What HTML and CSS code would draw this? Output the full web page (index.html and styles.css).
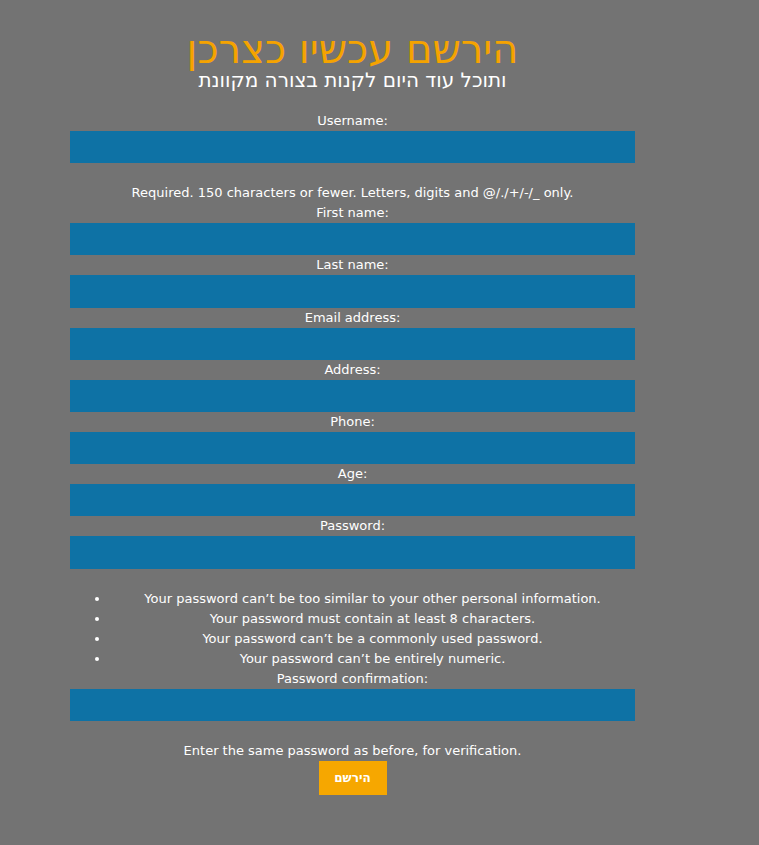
FILE: index.html
```html
<!DOCTYPE html>
<html lang="he">
<head>
<meta charset="utf-8">
<title>הירשם</title>
<link rel="stylesheet" href="styles.css">
</head>
<body>
<div class="page">
  <header class="hero">
    <h1 class="title">הירשם עכשיו כצרכן</h1>
    <h2 class="subtitle">ותוכל עוד היום לקנות בצורה מקוונת</h2>
  </header>
  <form class="form">
    <div class="field">
      <label class="label">Username:</label>
      <input class="input" type="text">
      <span class="help gap">Required. 150 characters or fewer. Letters, digits and @/./+/-/_ only.</span>
    </div>
    <div class="field">
      <label class="label">First name:</label>
      <input class="input" type="text">
    </div>
    <div class="field">
      <label class="label">Last name:</label>
      <input class="input" type="text">
    </div>
    <div class="field">
      <label class="label">Email address:</label>
      <input class="input" type="text">
    </div>
    <div class="field">
      <label class="label">Address:</label>
      <input class="input" type="text">
    </div>
    <div class="field">
      <label class="label">Phone:</label>
      <input class="input" type="text">
    </div>
    <div class="field">
      <label class="label">Age:</label>
      <input class="input" type="text">
    </div>
    <div class="field">
      <label class="label">Password:</label>
      <input class="input" type="password">
      <ul class="rules">
        <li>Your password can’t be too similar to your other personal information.</li>
        <li>Your password must contain at least 8 characters.</li>
        <li>Your password can’t be a commonly used password.</li>
        <li>Your password can’t be entirely numeric.</li>
      </ul>
    </div>
    <div class="field">
      <label class="label">Password confirmation:</label>
      <input class="input" type="password">
      <span class="help gap">Enter the same password as before, for verification.</span>
    </div>
    <div class="actions">
      <button class="submit" type="button">הירשם</button>
    </div>
  </form>
</div>
</body>
</html>
```
FILE: styles.css
```css
html, body {
  margin: 0;
  padding: 0;
  background: #737373;
}
body {
  font-family: "DejaVu Sans", sans-serif;
  font-size: 13px;
  line-height: 20px;
  color: #ffffff;
}
.page {
  width: 565px;
  margin-left: 70px;
  padding-top: 29px;
  text-align: center;
}
.hero {
  display: flex;
  flex-direction: column;
  align-items: center;
}
.title {
  margin: 0;
  font-family: "DejaVu Sans", sans-serif;
  font-weight: normal;
  font-size: 40px;
  line-height: 40px;
  color: #f5a300;
}
.subtitle {
  margin: 0;
  font-family: "DejaVu Sans", sans-serif;
  font-weight: normal;
  font-size: 20px;
  line-height: 22px;
  color: #ffffff;
}
.form {
  margin-top: 20px;
  display: flex;
  flex-direction: column;
}
.field {
  display: flex;
  flex-direction: column;
}
.label {
  display: block;
  height: 20px;
}
.input {
  display: block;
  box-sizing: border-box;
  width: 565px;
  height: 32.2px;
  margin: 0;
  border: 0;
  padding: 0 6px;
  background: #0e72a5;
  color: #fff;
  outline: none;
}
.help {
  display: block;
}
.gap {
  margin-top: 20px;
}
.rules {
  margin: 20px 0 0;
  padding-left: 40px;
  list-style: disc;
}
.rules li {
  line-height: 20px;
}
.actions {
  display: flex;
  justify-content: center;
}
.submit {
  width: 68px;
  height: 34px;
  border: 0;
  padding: 0;
  background: #f6a700;
  color: #ffffff;
  font-family: "DejaVu Sans", sans-serif;
  font-weight: bold;
  font-size: 12px;
  cursor: pointer;
}
```
